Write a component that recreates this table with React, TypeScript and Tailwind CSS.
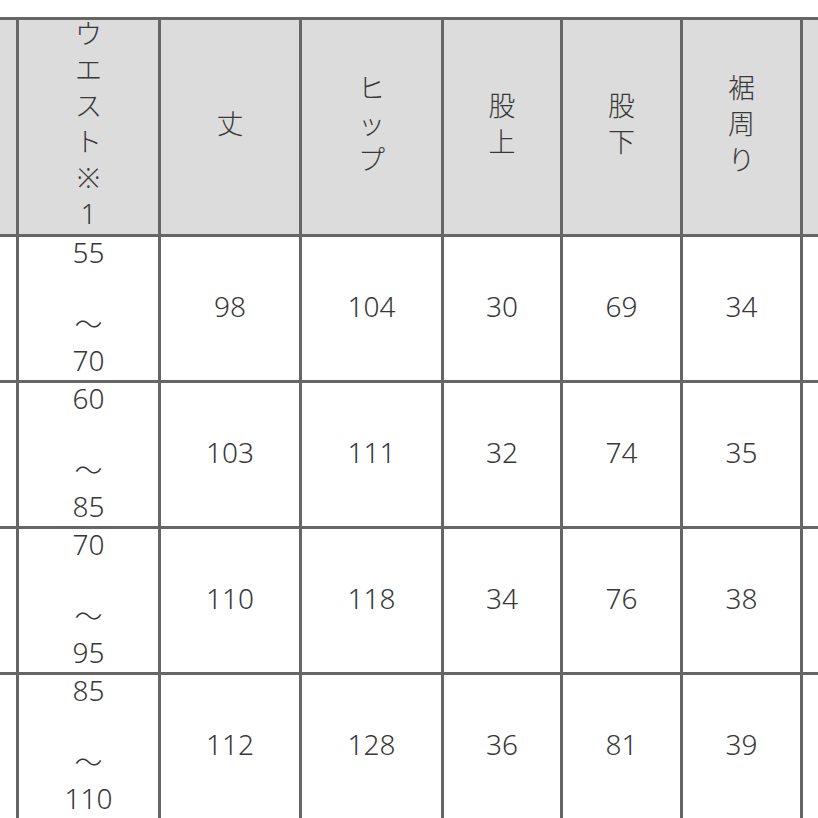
import React from "react";

const headers: string[][] = [
  [],
  ["ウ", "エ", "ス", "ト", "※", "1"],
  ["丈"],
  ["ヒ", "ッ", "プ"],
  ["股", "上"],
  ["股", "下"],
  ["裾", "周", "り"],
  [],
];

const rows: { waist: [string, string]; values: string[] }[] = [
  { waist: ["55", "70"], values: ["98", "104", "30", "69", "34"] },
  { waist: ["60", "85"], values: ["103", "111", "32", "74", "35"] },
  { waist: ["70", "95"], values: ["110", "118", "34", "76", "38"] },
  { waist: ["85", "110"], values: ["112", "128", "36", "81", "39"] },
];

const cell = "flex items-center justify-center text-center";
const inner = "flex flex-col items-center -translate-y-[3px]";

export default function App() {
  return (
    <div
      className="w-[818px] h-[818px] overflow-hidden bg-white text-[#383838] text-[27px] leading-[36px] font-light"
      style={{ fontFamily: '"Noto Sans", "Noto Sans CJK JP", sans-serif' }}
    >
      <div className="mt-[17px] border-t-[3px] border-[#666] bg-[#666] grid gap-[3px] grid-cols-[16px_139px_138px_139px_116px_117px_117px_15px] grid-rows-[214px_143px_143px_143px_143px]">
        {headers.map((chars, i) => (
          <div key={i} className={`${cell} bg-[#dcdcdc]`}>
            <div className={inner}>
              {chars.map((c, j) => (
                <span key={j} className="block">
                  {c}
                </span>
              ))}
            </div>
          </div>
        ))}
        {rows.map((row, r) => (
          <React.Fragment key={r}>
            <div className="bg-white" />
            <div className={`${cell} bg-white`}>
              <div className={`${inner} text-[28px]`}>
                <span className="block">{row.waist[0]}</span>
                <span className="block">&nbsp;</span>
                <span className="block">～</span>
                <span className="block">{row.waist[1]}</span>
              </div>
            </div>
            {row.values.map((v, k) => (
              <div key={k} className={`${cell} bg-white`}>
                <div className={`${inner} text-[28px]`}>{v}</div>
              </div>
            ))}
            <div className="bg-white" />
          </React.Fragment>
        ))}
      </div>
    </div>
  );
}
